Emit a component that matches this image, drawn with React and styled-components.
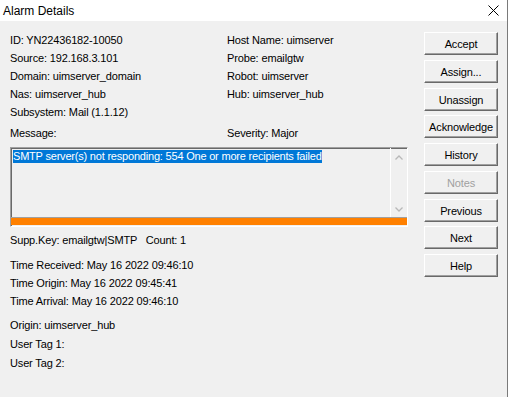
import React from "react"
import styled, { createGlobalStyle } from "styled-components"

const GlobalStyle = createGlobalStyle`
  html, body {
    margin: 0;
    padding: 0;
    background: #ffffff;
  }
  body {
    font-family: "Liberation Sans", Arial, sans-serif;
    font-size: 11px;
    letter-spacing: -0.15px;
    color: #000000;
  }
`

const Window = styled.div`
  width: 508px;
  height: 397px;
  box-sizing: border-box;
  border-right: 1px solid #7a7a7a;
  background: #f0f0f0;
  display: flex;
  flex-direction: column;
`

const TitleBar = styled.div`
  height: 21px;
  flex: none;
  background: #ffffff;
  display: flex;
  align-items: center;
  justify-content: space-between;
  padding: 0 8px 0 3px;
  font-size: 12px;
  letter-spacing: 0;
`

const Body = styled.div`
  display: flex;
  padding-top: 10px;
`

const Main = styled.div`
  width: 398px;
  margin-left: 10px;
  display: flex;
  flex-direction: column;
`

const InfoGrid = styled.div`
  display: grid;
  grid-template-columns: 217px 1fr;
  grid-auto-rows: ${(p) => p.$row || 18}px;
  line-height: ${(p) => p.$row || 18}px;
  margin-top: ${(p) => p.$top || 0}px;
  white-space: pre;
`

const Line = styled.div`
  height: ${(p) => p.$row || 18}px;
  line-height: ${(p) => p.$row || 18}px;
  white-space: pre;
`

const Stack = styled.div`
  margin-top: ${(p) => p.$top || 0}px;
`

const Frame = styled.div`
  margin-top: 5px;
  height: 80px;
  box-sizing: border-box;
  border: 1px solid;
  border-color: #a0a0a0 #ffffff #ffffff #a0a0a0;
  box-shadow: inset 1px 1px #696969;
  display: flex;
  flex-direction: column;
  padding-bottom: 1px;
`

const MessageArea = styled.div`
  flex: 1;
  display: flex;
  border-bottom: 1px solid #a0a0a0;
`

const MessageText = styled.div`
  flex: 1;
  padding: 2px 0 0 2px;
`

const Selected = styled.span`
  background: #0078d7;
  color: #ffffff;
  line-height: 13px;
  display: inline-block;
  letter-spacing: -0.2px;
`

const ScrollBar = styled.div`
  width: 16px;
  border-left: 1px solid #ffffff;
  display: flex;
  flex-direction: column;
  align-items: center;
  justify-content: space-between;
  padding: 7px 0 5px;
`

const SeverityBar = styled.div`
  height: 7px;
  background: #ff8000;
`

const ButtonColumn = styled.div`
  margin-left: 16px;
  margin-top: 1px;
  width: 74px;
  display: flex;
  flex-direction: column;
  gap: 4.75px;
`

const Button = styled.div`
  height: 23px;
  box-sizing: border-box;
  border: 1px solid;
  border-color: #ffffff #696969 #696969 #ffffff;
  box-shadow: inset -1px -1px #a0a0a0;
  background: #f0f0f0;
  display: flex;
  align-items: center;
  justify-content: center;
  color: ${(p) => (p.$disabled ? "#a0a0a0" : "#000000")};
  padding-top: 1px;
`

const Chevron = ({ down }) => (
  <svg width="8" height="5" viewBox="0 0 8 5">
    <path
      d={down ? "M0.5 0.5 L4 4 L7.5 0.5" : "M0.5 4.5 L4 1 L7.5 4.5"}
      fill="none"
      stroke="#b8b8b8"
      strokeWidth="1.3"
    />
  </svg>
)

const CloseIcon = () => (
  <svg width="11" height="11" viewBox="0 0 11 11">
    <path d="M0.5 0.5 L10.5 10.5 M10.5 0.5 L0.5 10.5" stroke="#000" strokeWidth="1" />
  </svg>
)

const buttons = [
  "Accept",
  "Assign...",
  "Unassign",
  "Acknowledge",
  "History",
  "Notes",
  "Previous",
  "Next",
  "Help",
]

export default function App() {
  return (
    <Window>
      <GlobalStyle />
      <TitleBar>
        <span>Alarm Details</span>
        <CloseIcon />
      </TitleBar>
      <Body>
        <Main>
          <InfoGrid>
            <div>ID: YN22436182-10050</div>
            <div>Host Name: uimserver</div>
            <div>Source: 192.168.3.101</div>
            <div>Probe: emailgtw</div>
            <div>Domain: uimserver_domain</div>
            <div>Robot: uimserver</div>
            <div>Nas: uimserver_hub</div>
            <div>Hub: uimserver_hub</div>
            <div>Subsystem: Mail (1.1.12)</div>
            <div />
          </InfoGrid>
          <InfoGrid $top={3}>
            <div>Message:</div>
            <div>Severity: Major</div>
          </InfoGrid>
          <Frame>
            <MessageArea>
              <MessageText>
                <Selected>SMTP server(s) not responding: 554 One or more recipients failed</Selected>
              </MessageText>
              <ScrollBar>
                <Chevron />
                <Chevron down />
              </ScrollBar>
            </MessageArea>
            <SeverityBar />
          </Frame>
          <Stack $top={4}>
            <Line>Supp.Key: emailgtw|SMTP   Count: 1</Line>
          </Stack>
          <Stack $top={7}>
            <Line>Time Received: May 16 2022 09:46:10</Line>
            <Line>Time Origin: May 16 2022 09:45:41</Line>
            <Line>Time Arrival: May 16 2022 09:46:10</Line>
          </Stack>
          <Stack $top={6}>
            <Line $row={19}>Origin: uimserver_hub</Line>
            <Line $row={19}>User Tag 1:</Line>
            <Line $row={19}>User Tag 2:</Line>
          </Stack>
        </Main>
        <ButtonColumn>
          {buttons.map((b) => (
            <Button key={b} $disabled={b === "Notes"}>
              {b}
            </Button>
          ))}
        </ButtonColumn>
      </Body>
    </Window>
  )
}
